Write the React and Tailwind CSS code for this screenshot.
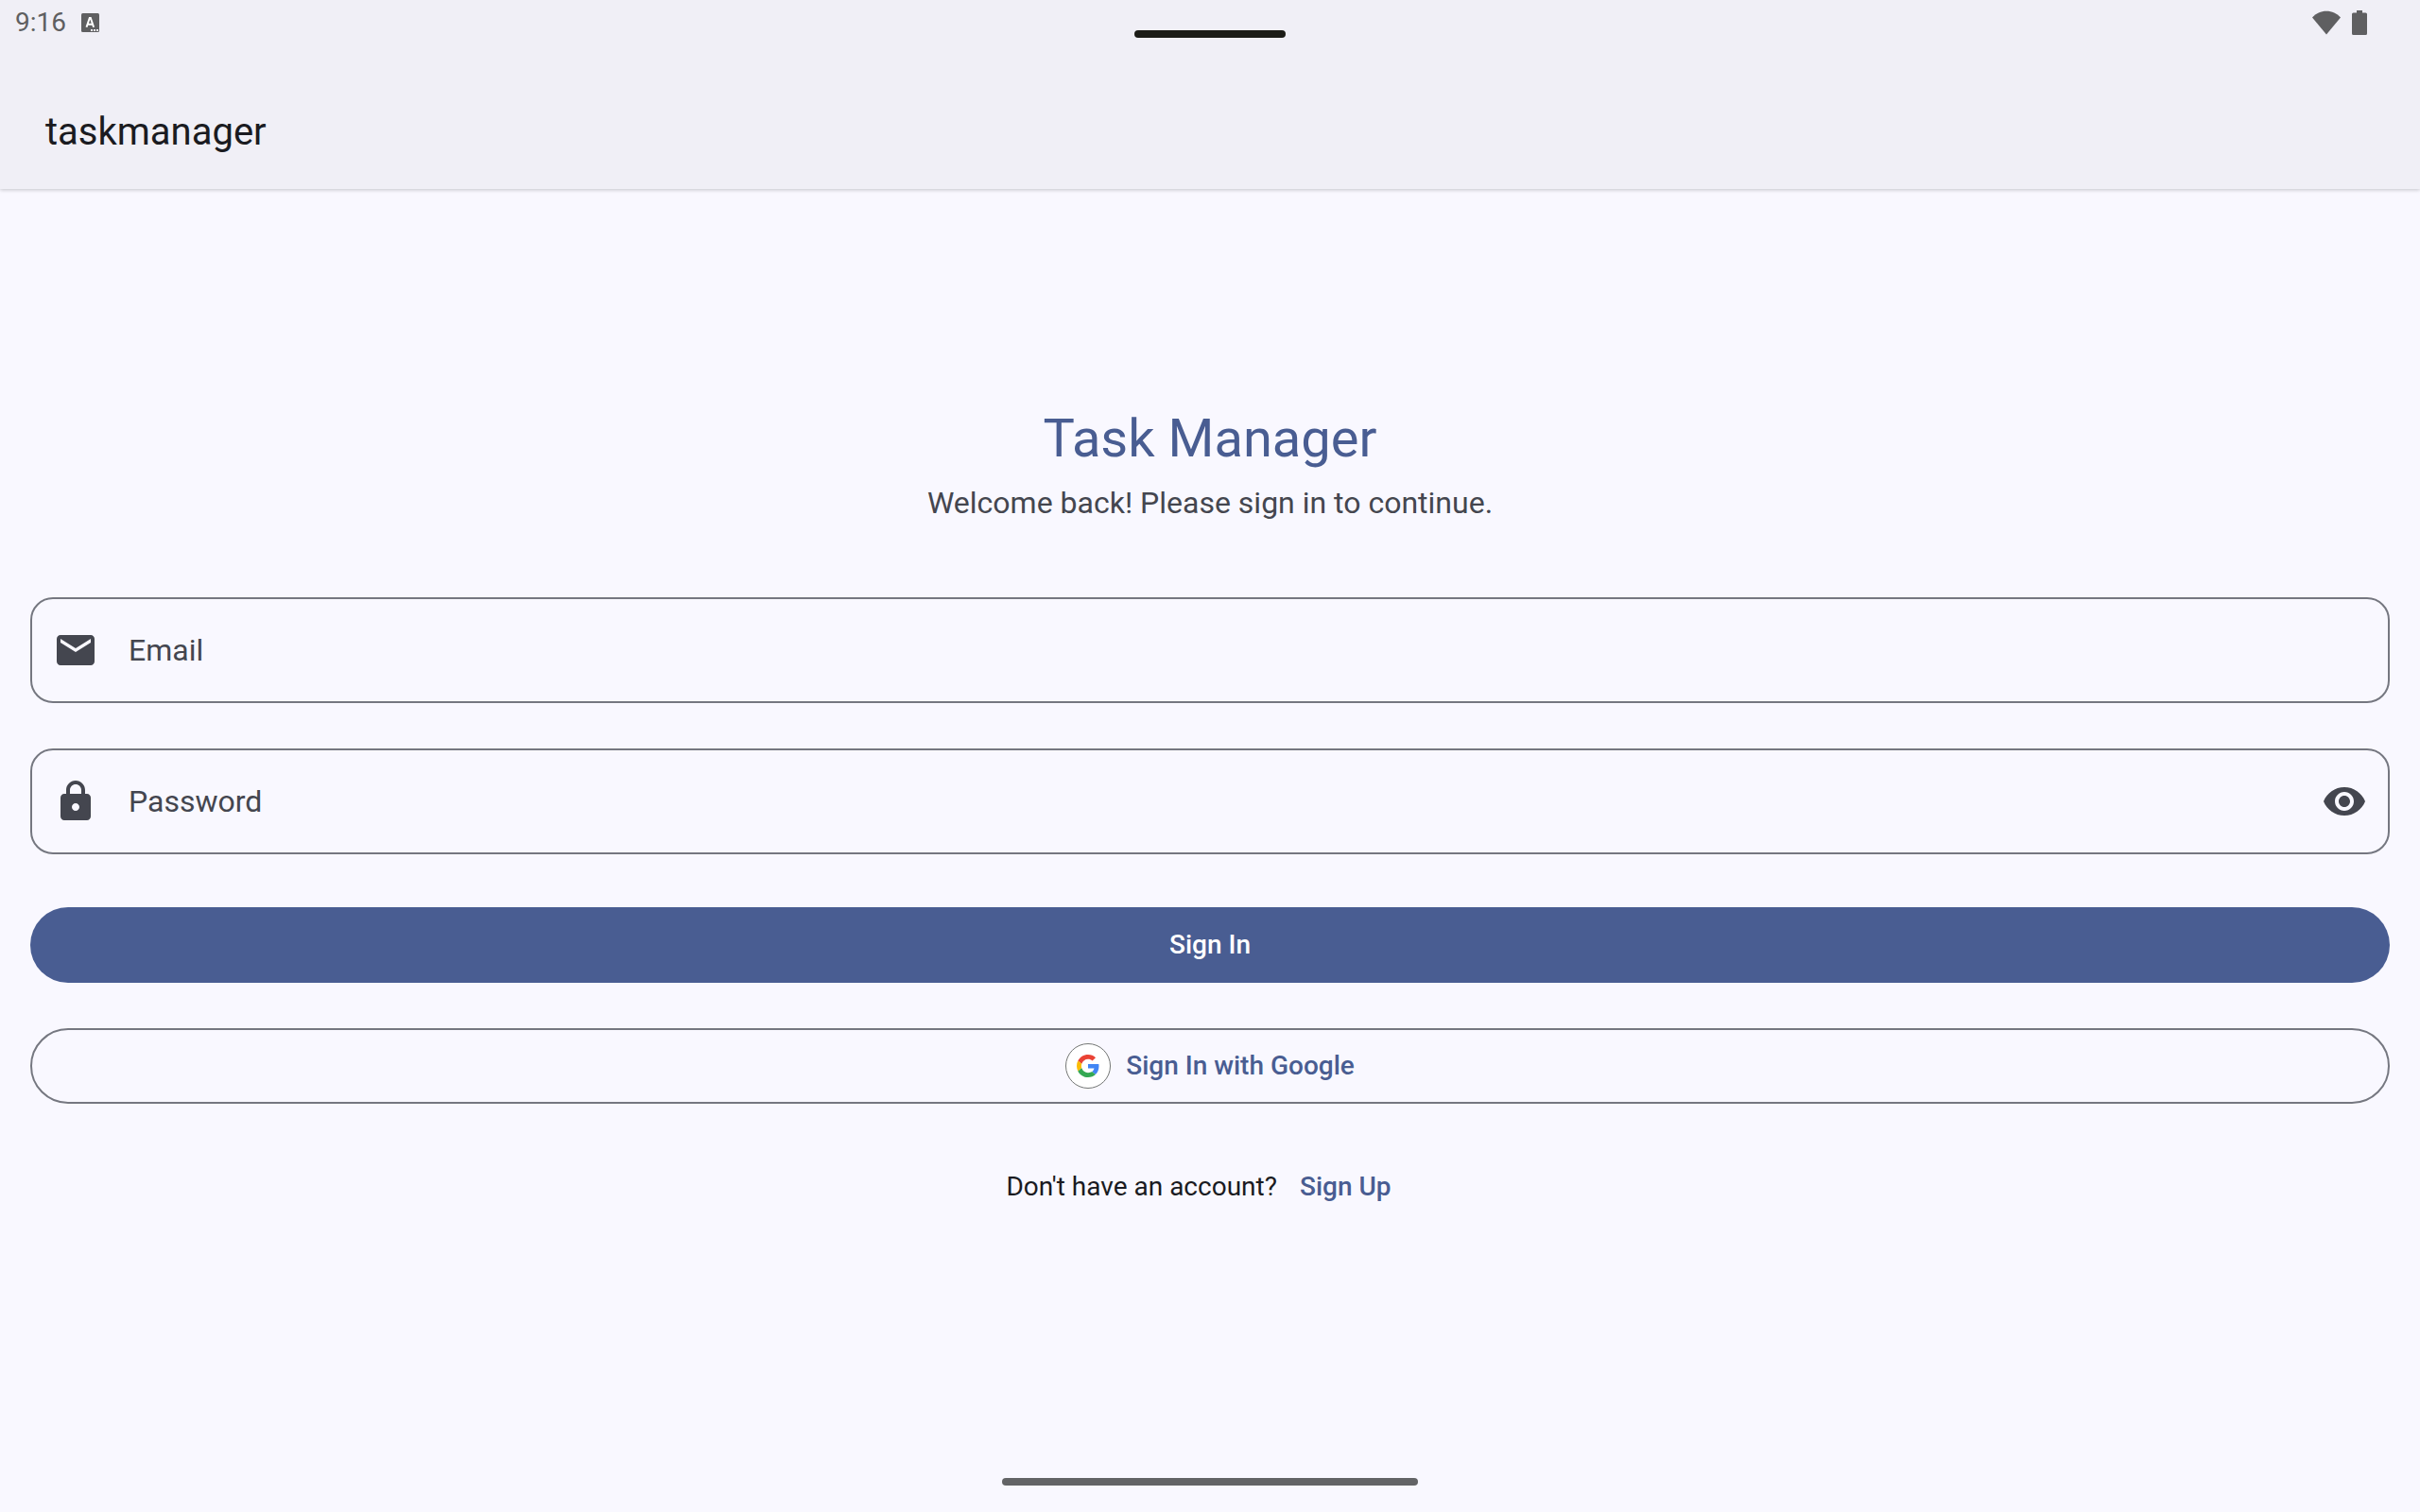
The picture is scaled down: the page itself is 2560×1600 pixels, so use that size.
import React, { useState } from "react";

function Icon({ path, className }) {
  return (
    <svg viewBox="0 0 24 24" className={className} fill="currentColor" aria-hidden="true">
      <path d={path} />
    </svg>
  );
}

const MAIL =
  "M20 4H4c-1.1 0-1.99.9-1.99 2L2 18c0 1.1.9 2 2 2h16c1.1 0 2-.9 2-2V6c0-1.1-.9-2-2-2zm0 4-8 5-8-5V6l8 5 8-5v2z";
const LOCK =
  "M18 8h-1V6c0-2.76-2.24-5-5-5S7 3.24 7 6v2H6c-1.1 0-2 .9-2 2v10c0 1.1.9 2 2 2h12c1.1 0 2-.9 2-2V10c0-1.1-.9-2-2-2zm-6 9c-1.1 0-2-.9-2-2s.9-2 2-2 2 .9 2 2-.9 2-2 2zM9 8V6c0-1.66 1.34-3 3-3s3 1.34 3 3v2H9z";
const EYE =
  "M12 4.5C7 4.5 2.73 7.61 1 12c1.73 4.39 6 7.5 11 7.5s9.27-3.11 11-7.5c-1.73-4.39-6-7.5-11-7.5zM12 17c-2.76 0-5-2.24-5-5s2.24-5 5-5 5 2.24 5 5-2.24 5-5 5zm0-8c-1.66 0-3 1.34-3 3s1.34 3 3 3 3-1.34 3-3-1.34-3-3-3z";

function StatusBar() {
  return (
    <div className="flex h-12 items-center justify-between pl-4 pr-14 text-[#5f5f61]">
      <div className="flex items-center gap-4">
        <span className="text-[28px] leading-8">9:16</span>
        <svg viewBox="0 0 19 20" className="h-5 w-[19px]" aria-hidden="true">
          <rect width="19" height="20" rx="1.5" fill="#5f5f61" />
          <path
            d="M5.5 14.8 8.800 5h1l3.300 9.800M6.800 11.800h5"
            fill="none"
            stroke="#fff"
            strokeWidth="2"
          />
          <path d="M10 17h2v2h-2zM13 17h2v2h-2zM16 17h2v2h-2z" fill="#f0eff6" />
        </svg>
      </div>
      <div className="flex items-center gap-3">
        <svg viewBox="0 0 30 26" className="h-[26px] w-[30px]" fill="currentColor" aria-hidden="true">
          <path d="M15 25.500 0 7.500C4 3.200 9.200.8 15 .8s11 2.400 15 6.700z" />
        </svg>
        <svg viewBox="0 0 16 26" className="h-[26px] w-4" fill="currentColor" aria-hidden="true">
          <path d="M5 0h6v2.500h3.500A1.500 1.500 0 0 1 16 4v20.500a1.500 1.500 0 0 1-1.500 1.500h-13A1.500 1.500 0 0 1 0 24.500V4a1.500 1.500 0 0 1 1.500-1.500H5z" />
        </svg>
      </div>
    </div>
  );
}

function GoogleLogo() {
  return (
    <span className="flex size-12 items-center justify-center rounded-full border border-[#747775] bg-white">
      <svg viewBox="0 0 48 48" className="size-6" aria-hidden="true">
        <path fill="#EA4335" d="M24 9.500c3.540 0 6.710 1.220 9.210 3.600l6.850-6.850C35.900 2.380 30.470 0 24 0 14.620 0 6.510 5.380 2.560 13.220l7.980 6.190C12.430 13.720 17.740 9.500 24 9.500z" />
        <path fill="#4285F4" d="M46.980 24.550c0-1.570-.15-3.090-.38-4.550H24v9.020h12.940c-.58 2.960-2.260 5.480-4.780 7.180l7.730 6c4.510-4.180 7.090-10.360 7.090-17.650z" />
        <path fill="#FBBC05" d="M10.530 28.590c-.48-1.450-.76-2.990-.76-4.590s.27-3.140.76-4.590l-7.980-6.190C.92 16.460 0 20.120 0 24c0 3.880.92 7.540 2.560 10.780l7.970-6.190z" />
        <path fill="#34A853" d="M24 48c6.480 0 11.930-2.130 15.890-5.810l-7.730-6c-2.150 1.450-4.920 2.300-8.160 2.300-6.260 0-11.570-4.220-13.470-9.910l-7.980 6.190C6.510 42.620 14.620 48 24 48z" />
      </svg>
    </span>
  );
}

function Field({ id, label, type, icon, children }) {
  return (
    <div className="flex h-28 items-center rounded-3xl border-2 border-[#757780] px-[22px] text-[32px] leading-12 text-[#44464f]">
      <Icon path={icon} className="size-12 shrink-0" />
      <label htmlFor={id} className="pl-8">
        {label}
      </label>
      <input
        id={id}
        type={type}
        className="h-full min-w-0 flex-1 bg-transparent px-8 outline-none"
      />
      {children}
    </div>
  );
}

export default function App() {
  const [shown, setShown] = useState(false);
  return (
    <div className="flex min-h-screen flex-col bg-[#f9f8ff] font-['Roboto',sans-serif] text-[#1a1b21]">
      <header className="relative bg-[#f0eff6] shadow-[0_1px_4px_rgba(0,0,0,0.22)]">
        <StatusBar />
        <div className="absolute left-1/2 top-8 h-2 w-40 -translate-x-1/2 rounded-full bg-[#1c1c17]" />
        <div className="flex h-38 items-center px-12 pt-8">
          <h1 className="text-[40px] leading-14">taskmanager</h1>
        </div>
      </header>

      <main className="flex flex-1 flex-col justify-center px-8 pb-3">
        <div className="text-center">
          <h2 className="text-[56px] leading-18 text-[#495d92]">Task Manager</h2>
          <p className="mt-2 text-[32px] leading-12 text-[#44464f]">
            Welcome back! Please sign in to continue.
          </p>
        </div>
        <form className="mt-19 flex flex-col gap-12" onSubmit={(e) => e.preventDefault()}>
          <Field id="email" label="Email" type="email" icon={MAIL} />
          <Field id="password" label="Password" type={shown ? "text" : "password"} icon={LOCK}>
            <button type="button" aria-label="Show password" onClick={() => setShown(!shown)}>
              <Icon path={EYE} className="size-12" />
            </button>
          </Field>
          <button
            type="submit"
            className="mt-2 h-20 rounded-full bg-[#495d92] text-[28px] font-medium leading-10 text-white"
          >
            Sign In
          </button>
          <button
            type="button"
            className="flex h-20 items-center justify-center gap-4 rounded-full border-2 border-[#757780] text-[28px] font-medium leading-10 text-[#495d92]"
          >
            <GoogleLogo />
            Sign In with Google
          </button>
        </form>
        <div className="mt-12 flex h-20 items-center justify-center text-[28px] leading-10">
          <span>Don't have an account?</span>
          <a href="#signup" className="px-6 font-medium text-[#495d92]">
            Sign Up
          </a>
        </div>
      </main>

      <footer className="flex h-16 items-center justify-center">
        <div className="h-2 w-110 rounded-full bg-[#636466]" />
      </footer>
    </div>
  );
}
